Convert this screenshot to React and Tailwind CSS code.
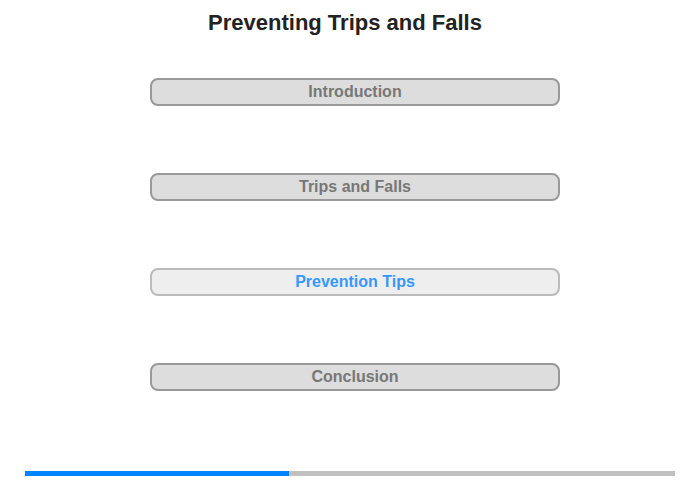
export default function App() {
  const sections = [
    { label: 'Introduction' },
    { label: 'Trips and Falls' },
    { label: 'Prevention Tips', active: true },
    { label: 'Conclusion' },
  ]

  return (
    <div className="w-[700px] h-[480px] bg-white flex flex-col font-['Liberation_Sans',Arial,sans-serif]">
      <h1 className="h-[44px] pr-[10px] flex items-center justify-center text-[22px] font-bold text-[#222]">
        Preventing Trips and Falls
      </h1>
      <nav className="mt-[34px] pl-[10px] flex flex-col items-center gap-[67px]">
        {sections.map(s => (
          <button
            key={s.label}
            className={`w-[410px] h-[28px] rounded-[8px] border-2 text-[16px] font-bold flex items-center justify-center ${
              s.active
                ? 'bg-[#eeeeee] border-[#bbbbbb] text-[#3399ff]'
                : 'bg-[#dddddd] border-[#999999] text-[#777777]'
            }`}
          >
            {s.label}
          </button>
        ))}
      </nav>
      <div className="mt-auto mb-[4px] mx-[25px] h-[5px] flex bg-[#c0c0c0]">
        <div className="w-[264px] bg-[#0084ff]" />
      </div>
    </div>
  )
}
